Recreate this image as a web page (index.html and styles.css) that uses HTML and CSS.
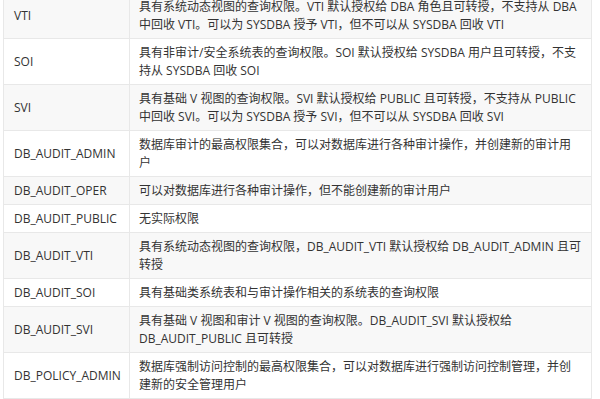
FILE: index.html
```html
<!DOCTYPE html>
<html lang="zh-CN">
<head>
<meta charset="utf-8">
<link rel="stylesheet" href="styles.css">
</head>
<body>
<table class="perm-table">
  <tbody>
    <tr><td class="name">VTI</td><td class="desc">具有系统动态视图的查询权限。VTI 默认授权给 DBA 角色且可转授，不支持从 DBA 中回收 VTI。可以为 SYSDBA 授予 VTI，但不可以从 SYSDBA 回收 VTI</td></tr>
    <tr><td class="name">SOI</td><td class="desc">具有非审计/安全系统表的查询权限。SOI 默认授权给 SYSDBA 用户且可转授，不支持从 SYSDBA 回收 SOI</td></tr>
    <tr><td class="name">SVI</td><td class="desc">具有基础 V 视图的查询权限。SVI 默认授权给 PUBLIC 且可转授，不支持从 PUBLIC 中回收 SVI。可以为 SYSDBA 授予 SVI，但不可以从 SYSDBA 回收 SVI</td></tr>
    <tr><td class="name">DB_AUDIT_ADMIN</td><td class="desc">数据库审计的最高权限集合，可以对数据库进行各种审计操作，并创建新的审计用户</td></tr>
    <tr><td class="name">DB_AUDIT_OPER</td><td class="desc">可以对数据库进行各种审计操作，但不能创建新的审计用户</td></tr>
    <tr><td class="name">DB_AUDIT_PUBLIC</td><td class="desc">无实际权限</td></tr>
    <tr><td class="name">DB_AUDIT_VTI</td><td class="desc">具有系统动态视图的查询权限，DB_AUDIT_VTI 默认授权给 DB_AUDIT_ADMIN 且可转授</td></tr>
    <tr><td class="name">DB_AUDIT_SOI</td><td class="desc">具有基础类系统表和与审计操作相关的系统表的查询权限</td></tr>
    <tr><td class="name">DB_AUDIT_SVI</td><td class="desc">具有基础 V 视图和审计 V 视图的查询权限。DB_AUDIT_SVI 默认授权给 DB_AUDIT_PUBLIC 且可转授</td></tr>
    <tr><td class="name">DB_POLICY_ADMIN</td><td class="desc">数据库强制访问控制的最高权限集合，可以对数据库进行强制访问控制管理，并创建新的安全管理用户</td></tr>
  </tbody>
</table>
</body>
</html>
```

FILE: styles.css
```css
html, body {
  margin: 0;
  padding: 0;
  background: #ffffff;
}
body {
  padding-left: 3px;
  overflow: hidden;
}
.perm-table {
  margin-top: -8px;
  width: 589px;
  border-collapse: collapse;
  table-layout: fixed;
  font-family: "Open Sans", "Noto Sans CJK SC", sans-serif;
  font-size: 12px;
  line-height: 18px;
  color: #333333;
}
.perm-table td {
  border: 1px solid #e8e8e8;
  padding: 4.5px 9px 4.5px 10px;
  vertical-align: middle;
}
.perm-table tr:nth-child(odd) td {
  background: #f8f8f8;
}
.perm-table tr:nth-child(even) td {
  background: #ffffff;
}
.perm-table td.name {
  width: 106px;
}
.perm-table td.desc {
  padding-left: 9px;
}
```
